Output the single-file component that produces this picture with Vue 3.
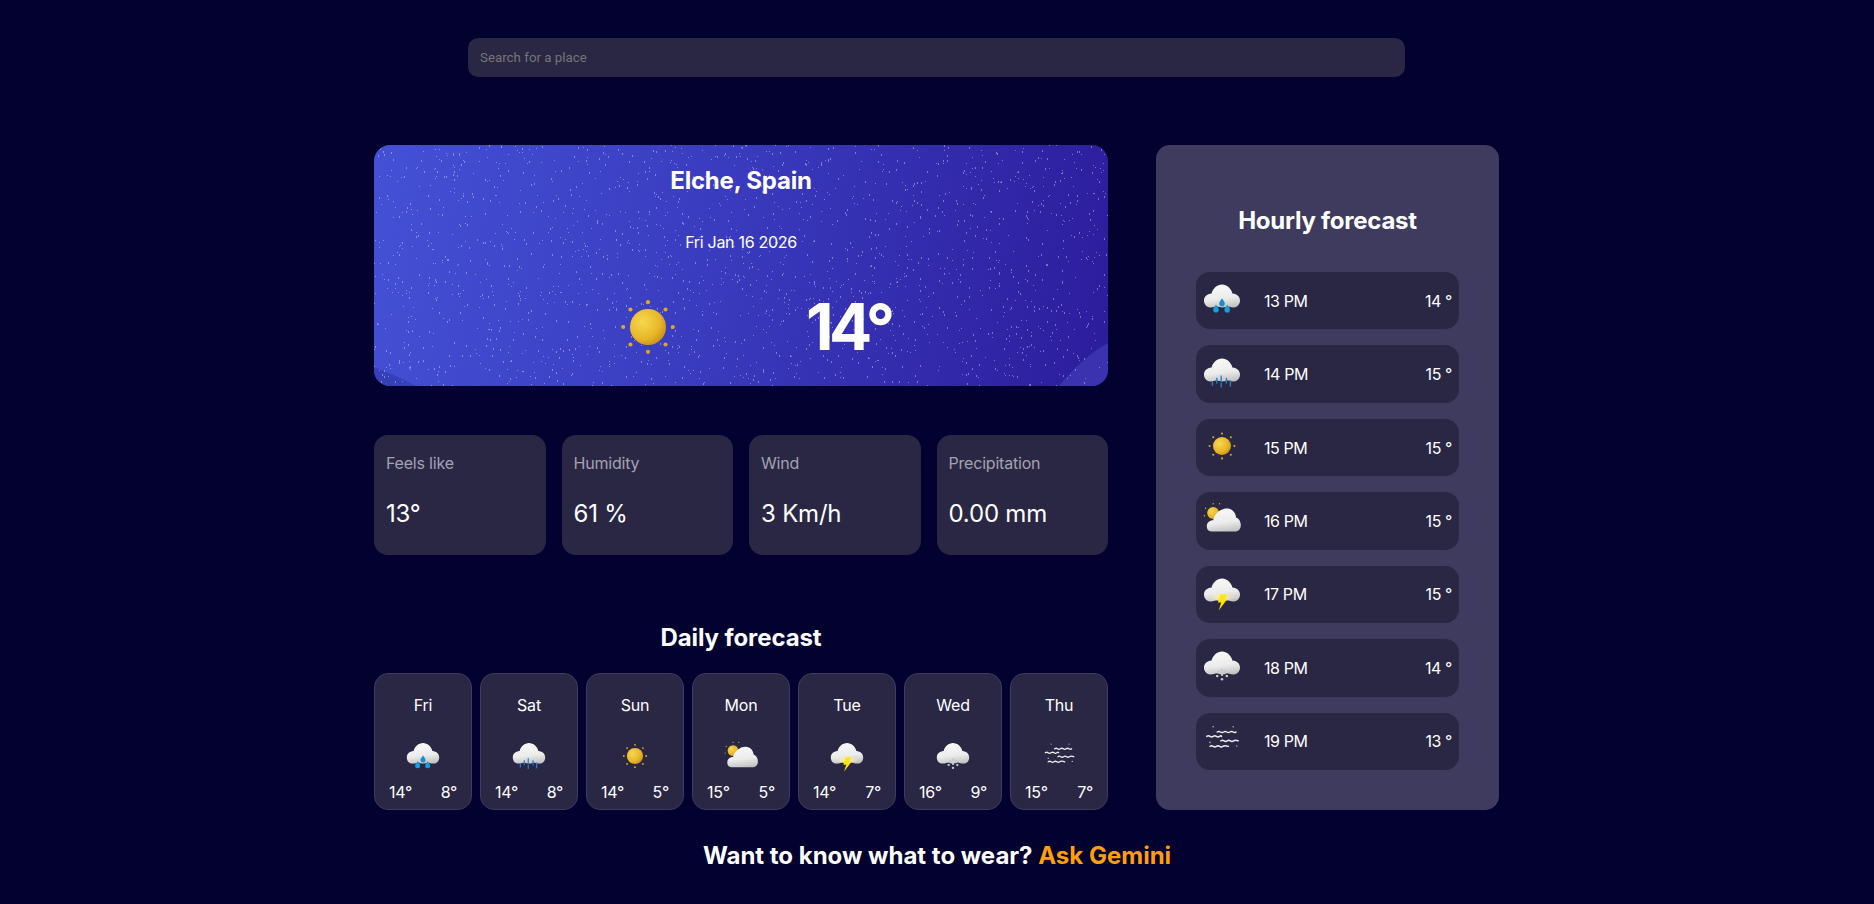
<script setup>
// dados fixos do tempo
const stats = [
  { label: 'Feels like', value: '13°' },
  { label: 'Humidity', value: '61 %' },
  { label: 'Wind', value: '3 Km/h' },
  { label: 'Precipitation', value: '0.00 mm' }
]

const daily = [
  { day: 'Fri', icon: 'drops', max: 14, min: 8 },
  { day: 'Sat', icon: 'rain', max: 14, min: 8 },
  { day: 'Sun', icon: 'sun', max: 14, min: 5 },
  { day: 'Mon', icon: 'partly', max: 15, min: 5 },
  { day: 'Tue', icon: 'storm', max: 14, min: 7 },
  { day: 'Wed', icon: 'snow', max: 16, min: 9 },
  { day: 'Thu', icon: 'fog', max: 15, min: 7 }
]

const hourly = [
  { hour: '13 PM', icon: 'drops', temp: 14 },
  { hour: '14 PM', icon: 'rain', temp: 15 },
  { hour: '15 PM', icon: 'sun', temp: 15 },
  { hour: '16 PM', icon: 'partly', temp: 15 },
  { hour: '17 PM', icon: 'storm', temp: 15 },
  { hour: '18 PM', icon: 'snow', temp: 14 },
  { hour: '19 PM', icon: 'fog', temp: 13 }
]

// estrelas do fundo, com semente fixa
let seed = 7
const rnd = () => {
  seed = (seed * 16807) % 2147483647
  return seed / 2147483647
}
let starPath = ''
for (let i = 0; i < 1900; i++) {
  const x = Math.floor(rnd() * 734)
  const y = Math.floor(rnd() * 241)
  const h = rnd() > 0.6 ? 2 : 1
  starPath += `M${x} ${y}h1v${h}h-1z`
}

const rayAngles = [0, 45, 90, 135, 180, 225, 270, 315]
const rays = rayAngles.map((a) => ({
  x: 50 + 31 * Math.cos((a * Math.PI) / 180),
  y: 50 + 31 * Math.sin((a * Math.PI) / 180)
}))
</script>

<template>
  <div class="page">
    <svg class="icon-defs" aria-hidden="true">
      <defs>
        <linearGradient id="cloudFill" x1="0.4" y1="0" x2="0.6" y2="1">
          <stop offset="0" stop-color="#f8f8f8" />
          <stop offset="0.6" stop-color="#ececec" />
          <stop offset="1" stop-color="#c2c2c2" />
        </linearGradient>
        <radialGradient id="sunFill" cx="0.35" cy="0.35" r="0.8">
          <stop offset="0" stop-color="#f5d850" />
          <stop offset="0.6" stop-color="#e8b628" />
          <stop offset="1" stop-color="#bf8510" />
        </radialGradient>
        <radialGradient id="stormGlow" cx="0.5" cy="0.7" r="0.5">
          <stop offset="0" stop-color="#fff2a0" />
          <stop offset="1" stop-color="#fff2a0" stop-opacity="0" />
        </radialGradient>
        <path id="cloudShape" d="M21 71C10 71 5 62 5 54C5 44 12 37 24 36C27 24 38 14 50 14C62 14 73 24 76 36C88 37 95 44 95 54C95 62 90 71 79 71C70 71 66 68 62 68C56 72 44 72 38 68C34 68 30 71 21 71Z" />
      </defs>
      <symbol id="sun" viewBox="0 0 100 100">
        <circle cx="50" cy="50" r="22.5" fill="url(#sunFill)" />
        <circle v-for="(r, i) in rays" :key="i" :cx="r.x" :cy="r.y" r="2.6" fill="#dca922" />
      </symbol>
      <symbol id="drops" viewBox="0 0 100 100">
        <use href="#cloudShape" fill="url(#cloudFill)" />
        <path d="M50 48C53 54 57 56 57 61A7 7 0 0 1 43 61C43 56 47 54 50 48Z" fill="#1590cf" />
        <path d="M35 64C38 70 42 72 42 77A7 7 0 0 1 28 77C28 72 32 70 35 64Z" fill="#15a0dc" />
        <path d="M63 64C66 70 70 72 70 77A7 7 0 0 1 56 77C56 72 60 70 63 64Z" fill="#15a0dc" />
      </symbol>
      <symbol id="rain" viewBox="0 0 100 100">
        <use href="#cloudShape" fill="url(#cloudFill)" />
        <g stroke="#2283c6" stroke-width="3.4">
          <path d="M26 70V82M37 62V76M48 56V70M48 74V86M61 62V76M71 68V84" />
        </g>
      </symbol>
      <symbol id="partly" viewBox="0 0 100 100">
        <circle cx="28" cy="35" r="15" fill="url(#sunFill)" />
        <g fill="#d9a832">
          <circle cx="28" cy="12" r="1.8" /><circle cx="44" cy="12" r="1.8" />
          <circle cx="9" cy="23" r="1.8" /><circle cx="6" cy="42" r="1.8" />
        </g>
        <path d="M24 81C15 81 12 74 12 68C12 59 19 53 28 53C30 38 46 24 63 24C76 24 85 36 85 46C92 48 97 56 97 65C97 75 91 81 84 81Z" fill="url(#cloudFill)" />
      </symbol>
      <symbol id="storm" viewBox="0 0 100 100">
        <use href="#cloudShape" fill="url(#cloudFill)" />
        <ellipse cx="50" cy="56" rx="34" ry="14" fill="url(#stormGlow)" />
        <path d="M46 54H63L56 67H62L42 93L48 74H40Z" fill="#ffe600" />
      </symbol>
      <symbol id="snow" viewBox="0 0 100 100">
        <use href="#cloudShape" fill="url(#cloudFill)" />
        <g fill="#c7c6d4">
          <circle cx="50" cy="60" r="3.2" /><circle cx="42" cy="64" r="3.2" /><circle cx="58" cy="64" r="3.2" />
          <circle cx="50" cy="72" r="3.2" /><circle cx="38" cy="75" r="3.2" /><circle cx="62" cy="75" r="3.2" />
          <circle cx="50" cy="83" r="3.2" />
        </g>
      </symbol>
      <symbol id="fog" viewBox="0 0 100 100">
        <g fill="none" stroke="#ecebf0" stroke-width="3.6" stroke-linecap="round">
          <path d="M38 30q4-3 8 0t8 0t8 0t8 0t8 0t7 0" />
          <path d="M12 41q4-3 8 0t8 0t8 0t8 0t5 0" />
          <path d="M47 52q4-3 8 0t8 0t8 0t8 0t12 0" />
          <path d="M20 66q4-3 8 0t8 0t8 0t8 0t14 0" />
        </g>
        <g fill="#9fb4d6">
          <circle cx="28" cy="17" r="2" /><circle cx="78" cy="17" r="2" />
          <circle cx="20" cy="56" r="2" /><circle cx="87" cy="65" r="2" />
        </g>
      </symbol>
    </svg>

    <header class="search-row">
      <input class="search" type="text" placeholder="Search for a place" />
    </header>

    <main class="layout">
      <div class="left-col">
        <section class="hero">
          <svg class="hero-bg" viewBox="0 0 734 241" preserveAspectRatio="none" aria-hidden="true">
            <path d="M0 222C16 228 30 234 42 241H0Z" fill="#3540b8" />
            <path d="M685 241C700 222 716 208 734 198V241Z" fill="#3a32ae" />
            <path :d="starPath" fill="#ffffff" fill-opacity="0.36" />
          </svg>
          <h1 class="city">Elche, Spain</h1>
          <p class="date">Fri Jan 16 2026</p>
          <div class="now">
            <svg class="now-icon"><use href="#sun" /></svg>
            <span class="now-temp">14°</span>
          </div>
        </section>

        <section class="stats">
          <div v-for="s in stats" :key="s.label" class="stat">
            <span class="stat-label">{{ s.label }}</span>
            <span class="stat-value">{{ s.value }}</span>
          </div>
        </section>

        <section class="daily">
          <h2 class="daily-title">Daily forecast</h2>
          <div class="daily-list">
            <div v-for="d in daily" :key="d.day" class="day-card">
              <span class="day-name">{{ d.day }}</span>
              <svg class="day-icon"><use :href="'#' + d.icon" /></svg>
              <div class="day-temps">
                <span>{{ d.max }}°</span>
                <span>{{ d.min }}°</span>
              </div>
            </div>
          </div>
        </section>
      </div>

      <aside class="hourly">
        <h2 class="hourly-title">Hourly forecast</h2>
        <div class="hourly-list">
          <div v-for="h in hourly" :key="h.hour" class="hour-row">
            <svg class="hour-icon"><use :href="'#' + h.icon" /></svg>
            <span class="hour-name">{{ h.hour }}</span>
            <span class="hour-temp">{{ h.temp }} °</span>
          </div>
        </div>
      </aside>
    </main>

    <footer class="ask">Want to know what to wear? <span class="ask-link">Ask Gemini</span></footer>
  </div>
</template>

<style>
body {
  background: #02012f;
}
</style>

<style scoped>
.page {
  height: 904px;
  overflow: hidden;
  display: flex;
  flex-direction: column;
  align-items: center;
  background: #02012f;
  color: #fff;
  font-family: "Inter", "Noto Sans", sans-serif;
}

.icon-defs {
  position: absolute;
  width: 0;
  height: 0;
}

.search-row {
  width: 937px;
  margin: 38px 1px 0 0;
}

.search {
  display: block;
  width: 100%;
  height: 39px;
  box-sizing: border-box;
  padding: 0 12px;
  border: none;
  border-radius: 10px;
  outline: none;
  background: #2a2744;
  color: #fff;
  font-family: "Roboto", sans-serif;
  font-size: 13.33px;
}

.search::placeholder {
  color: #757575;
}

.layout {
  width: 1125px;
  margin: 68px 1px 0 0;
  display: grid;
  grid-template-columns: 734px 343px;
  gap: 48px;
}

.left-col {
  display: flex;
  flex-direction: column;
}

/* hero */
.hero {
  position: relative;
  height: 241px;
  box-sizing: border-box;
  padding-top: 20px;
  border-radius: 16px;
  overflow: hidden;
  text-align: center;
  background: linear-gradient(100deg, #4451d6 0%, #3a3cbf 45%, #2c1c9c 100%);
}

.hero-bg {
  position: absolute;
  inset: 0;
  width: 100%;
  height: 100%;
}

.city,
.date,
.now {
  position: relative;
}

.city {
  margin: 0;
  font-size: 24px;
  line-height: 32px;
  font-weight: 700;
  letter-spacing: -0.2px;
}

.date {
  margin: 35px 0 0;
  font-size: 16px;
  line-height: 21px;
  letter-spacing: -0.3px;
}

.now {
  display: flex;
  align-items: center;
  margin-top: 34px;
  padding-left: 234px;
  gap: 118px;
}

.now-icon {
  width: 80px;
  height: 80px;
}

.now-temp {
  font-size: 64px;
  line-height: 80px;
  font-weight: 700;
  letter-spacing: -4.5px;
}

/* stats */
.stats {
  margin-top: 49px;
  display: grid;
  grid-template-columns: repeat(4, 1fr);
  gap: 16px;
}

.stat {
  height: 120px;
  box-sizing: border-box;
  padding: 18px 12px 0;
  border-radius: 14px;
  background: #2a2744;
  display: flex;
  flex-direction: column;
  gap: 24px;
}

.stat-label {
  font-size: 16px;
  line-height: 21px;
  color: #a3a2b0;
  letter-spacing: -0.2px;
}

.stat-value {
  font-size: 24px;
  line-height: 32px;
  letter-spacing: -0.2px;
}

/* daily */
.daily {
  margin-top: 65px;
}

.daily-title {
  margin: 0 0 18px;
  font-size: 24px;
  line-height: 35px;
  font-weight: 700;
  text-align: center;
  letter-spacing: -0.1px;
}

.daily-list {
  display: grid;
  grid-template-columns: repeat(7, 1fr);
  gap: 8px;
}

.day-card {
  height: 137px;
  box-sizing: border-box;
  padding: 21px 14px 0;
  border: 1px solid #3e3b5e;
  border-radius: 14px;
  background: #2a2744;
  display: flex;
  flex-direction: column;
  align-items: center;
}

.day-name {
  font-size: 16px;
  line-height: 21px;
  letter-spacing: -0.2px;
}

.day-icon {
  width: 36px;
  height: 36px;
  margin-top: 22px;
}

.day-temps {
  width: 100%;
  margin-top: 8px;
  display: flex;
  justify-content: space-between;
  font-size: 16px;
  line-height: 21px;
  letter-spacing: -0.3px;
}

/* hourly */
.hourly {
  box-sizing: border-box;
  padding: 40px;
  border-radius: 14px;
  background: #3e3b5e;
  display: flex;
  flex-direction: column;
}

.hourly-title {
  margin: 20px 0 35px;
  font-size: 24px;
  line-height: 32px;
  font-weight: 700;
  text-align: center;
  letter-spacing: -0.25px;
}

.hourly-list {
  flex: 1;
  display: flex;
  flex-direction: column;
  gap: 16px;
}

.hour-row {
  flex: 1;
  display: flex;
  align-items: center;
  padding: 0 7px 0 6px;
  border-radius: 14px;
  background: #2a2744;
  font-size: 16px;
  letter-spacing: -0.4px;
}

.hour-icon {
  width: 40px;
  height: 40px;
  margin-top: -3px;
}

.hour-name {
  margin-left: 22px;
}

.hour-temp {
  margin-left: auto;
}

.ask {
  margin-top: 30px;
  font-size: 24px;
  line-height: 32px;
  font-weight: 700;
}

.ask-link {
  color: #ff9f0a;
}
</style>
